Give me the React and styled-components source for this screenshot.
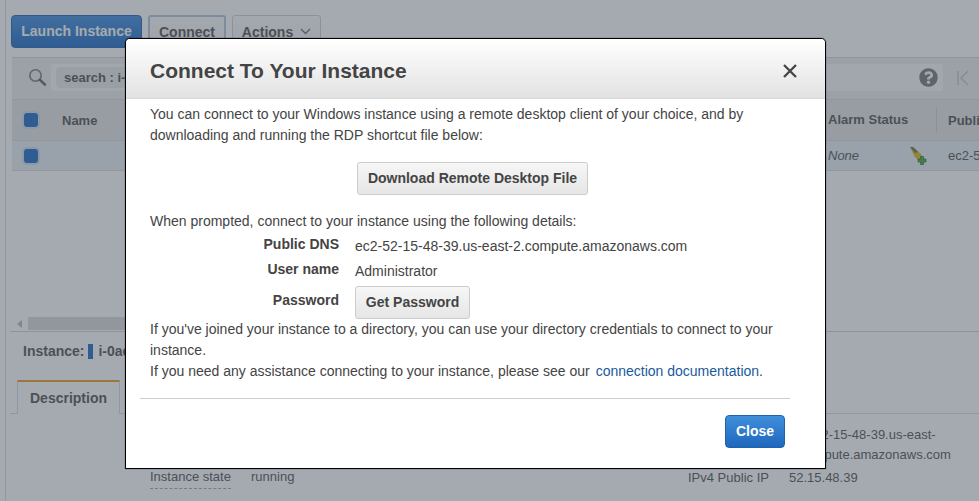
import React from "react";
import styled, { createGlobalStyle } from "styled-components";
import { FaQuestionCircle } from "react-icons/fa";

const Global = createGlobalStyle`
  html, body { margin: 0; padding: 0; height: 100%; overflow: hidden; }
  body { font-family: "Liberation Sans", Arial, sans-serif; background: #fff; color: #444; }
`;

const SearchIcon = () => (
  <svg width="19" height="19" viewBox="0 0 19 19" fill="none">
    <circle cx="7.5" cy="7.5" r="5.7" stroke="#7d8186" strokeWidth="1.6" />
    <path d="M11.8 11.8 L17 16.6" stroke="#6a6e73" strokeWidth="2.6" strokeLinecap="round" />
  </svg>
);

const PlugIcon = () => (
  <svg width="20" height="20" viewBox="0 0 20 20">
    <path d="M1 1 L4 1 L12 8 L14 12 L10 15 L6 11 Z" fill="#e0bb20" />
    <path d="M1 1 L4 1 L9 6 L6 7 Z" fill="#77766a" />
    <path d="M11.5 10.5h3v2.5h2.5v3h-2.5v2.5h-3V16H9v-3h2.5z" fill="#4fae48" stroke="#1f6b20" strokeWidth=".6" />
  </svg>
);

export default function App() {
  return (
    <Page>
      <Global />
      <Console>
        <Toolbar>
          <LaunchButton>Launch Instance</LaunchButton>
          <ToolButton $w={78} $focus>Connect</ToolButton>
          <ToolButton $w={89}>
            Actions
            <svg width="11" height="7" viewBox="0 0 11 7" fill="none">
              <path d="M1 1 L5.5 5.5 L10 1" stroke="#777" strokeWidth="1.4" />
            </svg>
          </ToolButton>
        </Toolbar>
        <SearchPanel>
          <SearchIcon />
          <SearchField>
            <SearchTag>search : i-0ae</SearchTag>
            <HelpIcon><FaQuestionCircle /></HelpIcon>
          </SearchField>
          <Pager>
            <svg width="14" height="16" viewBox="0 0 14 16" fill="none">
              <path d="M2 1 V15 M12 1 L5 8 L12 15" stroke="#c6c8ca" strokeWidth="1.5" />
            </svg>
          </Pager>
        </SearchPanel>
        <HeaderRow>
          <CheckCell><Check /></CheckCell>
          <NameHead>Name</NameHead>
          <AlarmHead>Alarm Status</AlarmHead>
          <PublicHead>Public DNS</PublicHead>
        </HeaderRow>
        <DataRow>
          <CheckCell><Check /></CheckCell>
          <AlarmCell>None</AlarmCell>
          <PlugSlot><PlugIcon /></PlugSlot>
          <PublicCell>ec2-52-15-48-39</PublicCell>
        </DataRow>
        <TableSpace />
        <ScrollBar>
          <ScrollArrow />
          <ScrollThumb />
        </ScrollBar>
        <InstanceLine>
          <b>Instance:</b><StateMark /><b>i-0ae</b>
        </InstanceLine>
        <Tabs>
          <Tab>Description</Tab>
        </Tabs>
        <Details>
          <DetailColumn>
            <DetailRow $top={53}>
              <DashedLabel>Instance state</DashedLabel>
              <span>running</span>
            </DetailRow>
          </DetailColumn>
          <DetailColumn $right>
            <DetailRow $top={11}>
              <DetailLabel>Public DNS</DetailLabel>
              <DnsValue>ec2-52-15-48-39.us-east-2.compute.amazonaws.com</DnsValue>
            </DetailRow>
            <DetailRow $top={3}>
              <DetailLabel>IPv4 Public IP</DetailLabel>
              <span>52.15.48.39</span>
            </DetailRow>
          </DetailColumn>
        </Details>
      </Console>
      <Overlay />
      <Modal>
        <ModalHeader>
          <ModalTitle>Connect To Your Instance</ModalTitle>
          <CloseGlyph>
            <svg width="14" height="14" viewBox="0 0 14 14" fill="none">
              <path d="M1 1 L13 13 M13 1 L1 13" stroke="#444" strokeWidth="2.3" />
            </svg>
          </CloseGlyph>
        </ModalHeader>
        <ModalBody>
          <Para>
            You can connect to your Windows instance using a remote desktop client of your choice, and by
            <br />
            downloading and running the RDP shortcut file below:
          </Para>
          <CenterRow>
            <GreyButton $w={231}>Download Remote Desktop File</GreyButton>
          </CenterRow>
          <Para>When prompted, connect to your instance using the following details:</Para>
          <InfoGrid>
            <InfoLabel>Public DNS</InfoLabel>
            <InfoValue>ec2-52-15-48-39.us-east-2.compute.amazonaws.com</InfoValue>
            <InfoLabel>User name</InfoLabel>
            <InfoValue>Administrator</InfoValue>
            <InfoLabel>Password</InfoLabel>
            <PasswordButton $w={115}>Get Password</PasswordButton>
          </InfoGrid>
          <Para>
            If you've joined your instance to a directory, you can use your directory credentials to connect to your
            instance.
            <br />
            If you need any assistance connecting to your instance, please see our <DocLink>connection documentation</DocLink>.
          </Para>
        </ModalBody>
        <ModalFooter>
          <CloseButton>Close</CloseButton>
        </ModalFooter>
      </Modal>
    </Page>
  );
}

const Page = styled.div`
  position: relative;
  height: 100vh;
  overflow: hidden;
`;

const Console = styled.div`
  height: calc(100% - 11px);
  margin-left: 5px;
  padding-bottom: 11px;
  border-left: 1px solid #dcdcdc;
  font-size: 14px;
  color: #5c5c5c;
`;

const Overlay = styled.div`
  position: absolute;
  inset: 0;
  background: rgba(56, 66, 80, 0.45);
`;

const Toolbar = styled.div`
  display: flex;
  gap: 6px;
  height: 57px;
  box-sizing: border-box;
  padding: 15px 0 0 5px;
`;

const LaunchButton = styled.div`
  width: 131px;
  height: 33px;
  box-sizing: border-box;
  border: 1px solid #2a6db8;
  border-radius: 4px;
  background: linear-gradient(#4a93e0, #2a72c8);
  color: #fff;
  font-weight: bold;
  font-size: 14px;
  line-height: 31px;
  text-align: center;
`;

const ToolButton = styled.div`
  display: flex;
  align-items: center;
  justify-content: center;
  gap: 7px;
  width: ${p => p.$w}px;
  height: 33px;
  box-sizing: border-box;
  border: ${p => (p.$focus ? "2px solid #b4c8dc" : "1px solid #d0d3d6")};
  border-radius: 3px;
  background: linear-gradient(#fdfdfd, #f4f4f4);
  font-weight: bold;
  font-size: 14px;
`;

const SearchPanel = styled.div`
  display: flex;
  align-items: center;
  height: 42px;
  box-sizing: border-box;
  margin-left: 6px;
  padding: 0 0 2px 16px;
  background: #efefef;
  border-top: 1px solid #d8d8d8;
`;

const SearchField = styled.div`
  display: flex;
  align-items: center;
  justify-content: space-between;
  flex: 1;
  height: 27px;
  margin-left: 4px;
  padding-left: 5px;
  background: #fafafa;
  border-radius: 3px;
`;

const SearchTag = styled.span`
  display: inline-block;
  height: 21px;
  padding: 0 8px;
  background: #ebebeb;
  border-radius: 4px;
  font-size: 13px;
  font-weight: bold;
  line-height: 21px;
`;

const HelpIcon = styled.span`
  display: flex;
  padding-right: 5px;
  font-size: 19px;
  color: #808080;
`;

const Pager = styled.div`
  display: flex;
  width: 36px;
  padding-left: 13px;
  box-sizing: border-box;
`;

const HeaderRow = styled.div`
  display: flex;
  align-items: center;
  height: 40px;
  margin-left: 6px;
  background: #e8e8e8;
  border-top: 1px solid #dadada;
  border-bottom: 1px solid #dadada;
  font-size: 13px;
  font-weight: bold;
`;

const DataRow = styled.div`
  display: flex;
  align-items: center;
  height: 29px;
  margin-left: 6px;
  background: #e9eef4;
  border-bottom: 1px solid #dcdcdc;
`;

const CheckCell = styled.div`
  flex: 0 0 38px;
  padding-left: 12px;
  box-sizing: border-box;
`;

const Check = styled.div`
  width: 14px;
  height: 14px;
  border-radius: 3px;
  background: #2a72c8;
  box-shadow: 0 0 0 2px #cfdff0;
`;

const NameHead = styled.div`
  flex: 0 0 778px;
  padding-left: 12px;
  box-sizing: border-box;
`;

const AlarmHead = styled.div`
  flex: 0 0 109px;
  margin-right: 11px;
  box-sizing: border-box;
  border-right: 1px solid #d2d2d2;
  line-height: 24px;
  white-space: nowrap;
`;

const PublicHead = styled.div`
  white-space: nowrap;
`;

const AlarmCell = styled.div`
  flex: 0 0 81px;
  margin-left: 778px;
  font-style: italic;
  font-size: 13px;
`;

const PlugSlot = styled.div`
  display: flex;
  flex: 0 0 39px;
`;

const PublicCell = styled.div`
  white-space: nowrap;
  font-size: 13px;
`;

const TableSpace = styled.div`
  height: 145px;
`;

const ScrollBar = styled.div`
  display: flex;
  align-items: center;
  height: 15px;
  margin-left: 4px;
  border-bottom: 1px solid #d8d8d8;
`;

const ScrollArrow = styled.div`
  width: 0;
  height: 0;
  margin: 0 6px 0 7px;
  border: 4px solid transparent;
  border-right: 5px solid #bdbdbd;
  border-left: 0;
`;

const ScrollThumb = styled.div`
  flex: 0 0 420px;
  height: 13px;
  background: #dcdcdc;
`;

const InstanceLine = styled.div`
  display: flex;
  align-items: center;
  height: 38px;
  padding-left: 17px;
  font-size: 14px;
`;

const StateMark = styled.span`
  width: 5px;
  height: 15px;
  margin: 0 5px 0 4px;
  background: #2a72c8;
`;

const Tabs = styled.div`
  display: flex;
  height: 33px;
  margin: 10px 0 0 4px;
  padding-left: 7px;
  border-bottom: 1px solid #dcdcdc;
`;

const Tab = styled.div`
  width: 103px;
  height: 34px;
  box-sizing: border-box;
  border: 1px solid #dcdcdc;
  border-top: 2px solid #f0a030;
  border-bottom: 0;
  background: #fff;
  font-weight: bold;
  font-size: 14px;
  line-height: 32px;
  text-align: center;
`;

const Details = styled.div`
  display: flex;
  justify-content: space-between;
  padding-left: 144px;
  font-size: 13px;
`;

const DetailColumn = styled.div`
  flex: 0 0 ${p => (p.$right ? 291 : 400)}px;
`;

const DetailRow = styled.div`
  display: flex;
  margin-top: ${p => p.$top}px;
  line-height: 20px;
`;

const DetailLabel = styled.span`
  flex: 0 0 101px;
  white-space: nowrap;
`;

const DashedLabel = styled.span`
  flex: 0 0 81px;
  height: 21px;
  margin-right: 20px;
  border-bottom: 1px dashed #aaa;
  white-space: nowrap;
`;

const DnsValue = styled.span`
  width: 170px;
`;

const Modal = styled.div`
  position: absolute;
  left: 125px;
  top: 38px;
  width: 701px;
  height: 431px;
  box-sizing: border-box;
  display: flex;
  flex-direction: column;
  background: #fff;
  border: 1px solid #000;
  border-radius: 5px 5px 0 0;
  box-shadow: 0 0 1px #000;
  color: #444;
`;

const ModalHeader = styled.div`
  display: flex;
  align-items: center;
  justify-content: space-between;
  height: 60px;
  box-sizing: border-box;
  padding: 4px 28px 0 24px;
  background: linear-gradient(#fff, #e2e2e2);
  border-bottom: 1px solid #d5d5d5;
  border-radius: 4px 4px 0 0;
`;

const ModalTitle = styled.h2`
  margin: 0;
  font-size: 21px;
  font-weight: bold;
  color: #444;
`;

const CloseGlyph = styled.div`
  display: flex;
`;

const ModalBody = styled.div`
  flex: 1;
  padding: 5px 24px 0;
`;

const Para = styled.p`
  margin: 0;
  font-size: 14px;
  line-height: 21px;
  color: #444;
`;

const CenterRow = styled.div`
  display: flex;
  justify-content: center;
  margin: 16px 0;
  padding-right: 6px;
`;

const GreyButton = styled.div`
  width: ${p => p.$w}px;
  height: 33px;
  box-sizing: border-box;
  border: 1px solid #ccc;
  border-radius: 3px;
  background: linear-gradient(#f6f6f6, #e6e6e6);
  font-weight: bold;
  font-size: 14px;
  line-height: 31px;
  text-align: center;
  color: #444;
  white-space: nowrap;
`;

const PasswordButton = styled(GreyButton)`
  margin-top: 4px;
`;

const InfoGrid = styled.div`
  display: grid;
  grid-template-columns: 189px 1fr;
  column-gap: 16px;
  align-items: center;
`;

const InfoLabel = styled.div`
  height: 25px;
  font-weight: bold;
  font-size: 14px;
  line-height: 25px;
  text-align: right;
`;

const InfoValue = styled.div`
  height: 25px;
  box-sizing: border-box;
  padding-top: 4px;
  font-size: 14px;
  line-height: 21px;
`;

const DocLink = styled.a`
  margin-left: 2px;
  color: #1a5a9c;
`;

const ModalFooter = styled.div`
  display: flex;
  justify-content: flex-end;
  height: 70px;
  box-sizing: border-box;
  margin: 0 35px 0 14px;
  padding: 16px 5px 0 0;
  border-top: 1px solid #ccc;
`;

const CloseButton = styled.div`
  width: 60px;
  height: 33px;
  box-sizing: border-box;
  border: 1px solid #1d62ad;
  border-radius: 4px;
  background: linear-gradient(#3f8fdb, #1e67bd);
  color: #fff;
  font-weight: bold;
  font-size: 14px;
  line-height: 31px;
  text-align: center;
`;
